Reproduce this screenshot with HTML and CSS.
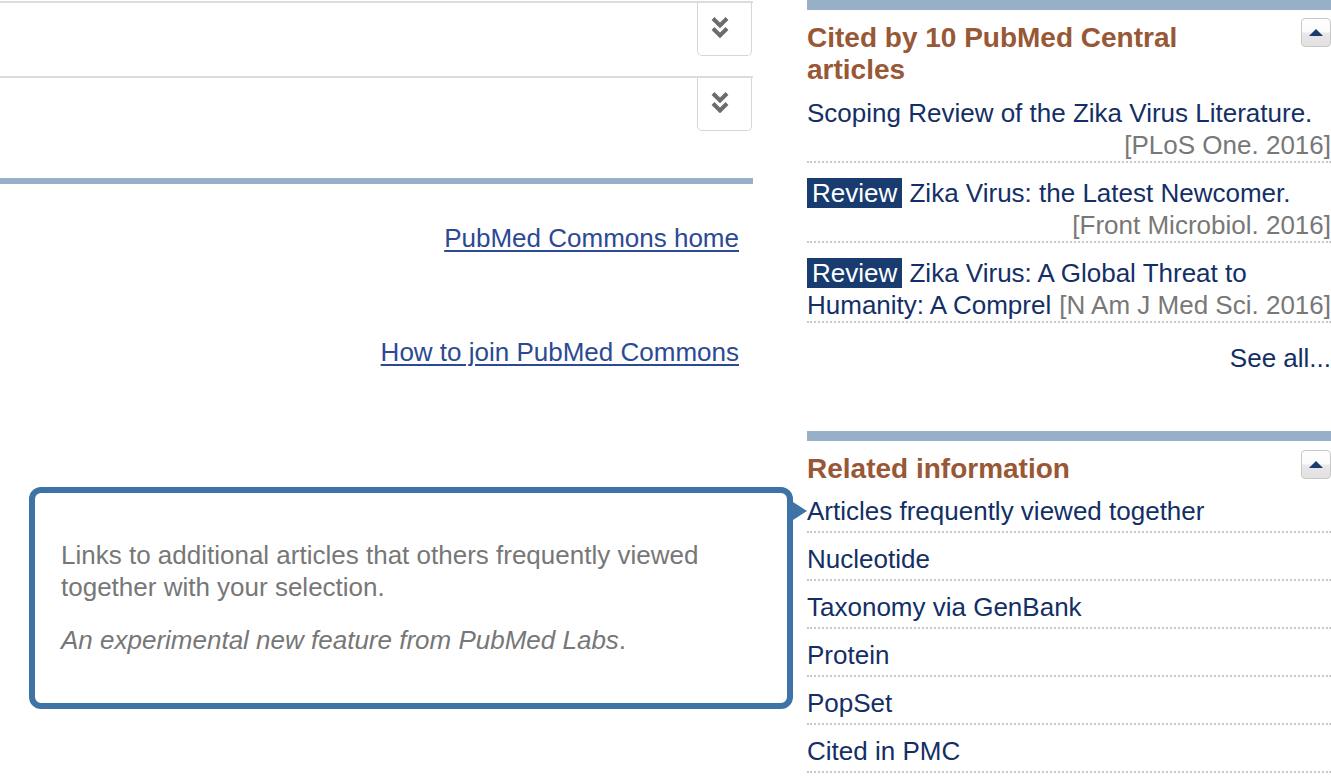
FILE: index.html
```html
<!DOCTYPE html>
<html>
<head>
<meta charset="utf-8">
<title>PubMed</title>
<link rel="stylesheet" href="styles.css">
</head>
<body>
<div class="page">
  <div class="main">
    <div class="fold">
      <button class="fold-btn" aria-label="Expand">
        <svg width="18" height="22" viewBox="0 0 18 22"><polyline points="2,2.5 9,9.5 16,2.5" /><polyline points="2,12.5 9,19.5 16,12.5" /></svg>
      </button>
    </div>
    <div class="fold">
      <button class="fold-btn" aria-label="Expand">
        <svg width="18" height="22" viewBox="0 0 18 22"><polyline points="2,2.5 9,9.5 16,2.5" /><polyline points="2,12.5 9,19.5 16,12.5" /></svg>
      </button>
    </div>
    <div class="bar bar-thin"></div>
    <div class="commons">
      <a class="commons-link first" href="#">PubMed Commons home</a>
      <a class="commons-link second" href="#">How to join PubMed Commons</a>
    </div>
  </div>

  <div class="side">
    <div class="bar"></div>
    <div class="portlet-head">
      <h3 class="portlet-title">Cited by 10 PubMed Central articles</h3>
      <button class="up-btn" aria-label="Collapse"><svg width="14" height="7" viewBox="0 0 14 7"><polygon points="0,7 7,0 14,7"/></svg></button>
    </div>
    <ul class="cited">
      <li><a href="#">Scoping Review of the Zika Virus Literature.</a><span class="source">[PLoS One. 2016]</span></li>
      <li><span class="review">Review</span> <a href="#">Zika Virus: the Latest Newcomer.</a><span class="source">[Front Microbiol. 2016]</span></li>
      <li><span class="review">Review</span> <a href="#">Zika Virus: A Global Threat to Humanity: A Comprel</a><span class="source">[N Am J Med Sci. 2016]</span></li>
    </ul>
    <div class="see-all"><a href="#">See all...</a></div>

    <div class="bar bar-related"></div>
    <div class="portlet-head related-head">
      <h3 class="portlet-title">Related information</h3>
      <button class="up-btn" aria-label="Collapse"><svg width="14" height="7" viewBox="0 0 14 7"><polygon points="0,7 7,0 14,7"/></svg></button>
    </div>
    <ul class="related">
      <li><a href="#">Articles frequently viewed together</a></li>
      <li><a href="#">Nucleotide</a></li>
      <li><a href="#">Taxonomy via GenBank</a></li>
      <li><a href="#">Protein</a></li>
      <li><a href="#">PopSet</a></li>
      <li><a href="#">Cited in PMC</a></li>
    </ul>
  </div>

  <div class="tooltip">
    <p>Links to additional articles that others frequently viewed together with your selection.</p>
    <p class="note"><em>An experimental new feature from PubMed Labs</em>.</p>
  </div>
</div>
</body>
</html>
```

FILE: styles.css
```css
html, body {
  margin: 0;
  padding: 0;
  background: #fff;
  overflow: hidden;
}
body {
  font-family: "Liberation Sans", Arial, Helvetica, sans-serif;
  font-size: 26px;
  line-height: 32px;
  color: #132f66;
}
a {
  color: #132f66;
  text-decoration: none;
}
.page {
  position: relative;
  display: flex;
  align-items: flex-start;
  gap: 54px;
  width: 1331px;
  height: 782px;
}
.main {
  width: 753px;
  flex: none;
  padding-top: 1px;
}
.fold {
  border-top: 2px solid #dcdcdc;
  height: 73px;
  display: flex;
  justify-content: flex-end;
  align-items: flex-start;
}
.fold-btn {
  width: 55px;
  height: 53px;
  margin-right: 1px;
  padding: 0 10px 4px 0;
  border: 1px solid #d6d6d6;
  border-top: none;
  border-radius: 0 0 5px 5px;
  background: #fff;
  display: flex;
  align-items: center;
  justify-content: center;
}
.fold-btn svg polyline {
  fill: none;
  stroke: #6c6c6c;
  stroke-width: 4;
}
.bar {
  height: 10px;
  background: #97afc7;
}
.bar-thin {
  height: 6px;
  margin-top: 27px;
}
.commons {
  display: flex;
  flex-direction: column;
  align-items: flex-end;
  padding-right: 14px;
}
.commons-link {
  color: #2c4a93;
  text-decoration: underline;
  text-decoration-thickness: 2px;
  text-underline-offset: 3px;
}
.commons-link.first {
  margin-top: 38px;
}
.commons-link.second {
  margin-top: 82px;
}
.side {
  width: 524px;
  flex: none;
}
.portlet-head {
  display: flex;
  align-items: flex-start;
  margin-top: 12px;
}
.portlet-title {
  flex: 1;
  margin: 0;
  padding-right: 40px;
  font-size: 28px;
  line-height: 32px;
  font-weight: bold;
  color: #985735;
}
.up-btn {
  width: 30px;
  height: 29px;
  margin-top: -4px;
  padding: 0;
  border: 1px solid #c8c8c8;
  border-radius: 4px;
  background: linear-gradient(#ffffff 0%, #fbfbfb 48%, #e8e8e8 52%, #e2e2e2 100%);
  display: flex;
  align-items: center;
  justify-content: center;
}
.up-btn svg polygon {
  fill: #1b3a6d;
}
.cited {
  list-style: none;
  margin: 11px 0 0;
  padding: 0;
}
.cited li {
  display: flow-root;
  border-bottom: 2px dotted #c9c9c9;
}
.cited li + li {
  margin-top: 14px;
}
.review {
  background: #183b70;
  color: #fff;
  padding: 0 5px;
}
.source {
  float: right;
  color: #787878;
}
.see-all {
  text-align: right;
  margin-top: 19px;
}
.bar-related {
  margin-top: 57px;
}
.related-head {
  margin-top: 12px;
}
.related-head .up-btn {
  margin-top: -3px;
}
.related {
  list-style: none;
  margin: 0;
  padding: 0;
}
.related li {
  padding: 10px 0 4px;
  border-bottom: 2px dotted #c9c9c9;
}
.tooltip {
  position: absolute;
  left: 29px;
  top: 487px;
  width: 752px;
  height: 210px;
  box-sizing: content-box;
  border: 6px solid #3e73a7;
  border-radius: 12px;
  background: #fff;
  padding: 0;
  color: #777;
}
.tooltip::after {
  content: "";
  position: absolute;
  right: -20px;
  top: 9px;
  border-left: 14px solid #3e73a7;
  border-top: 9px solid transparent;
  border-bottom: 9px solid transparent;
}
.tooltip p {
  margin: 0;
  padding: 0 26px;
}
.tooltip p:first-child {
  margin-top: 46px;
}
.tooltip .note {
  margin-top: 21px;
}
```
